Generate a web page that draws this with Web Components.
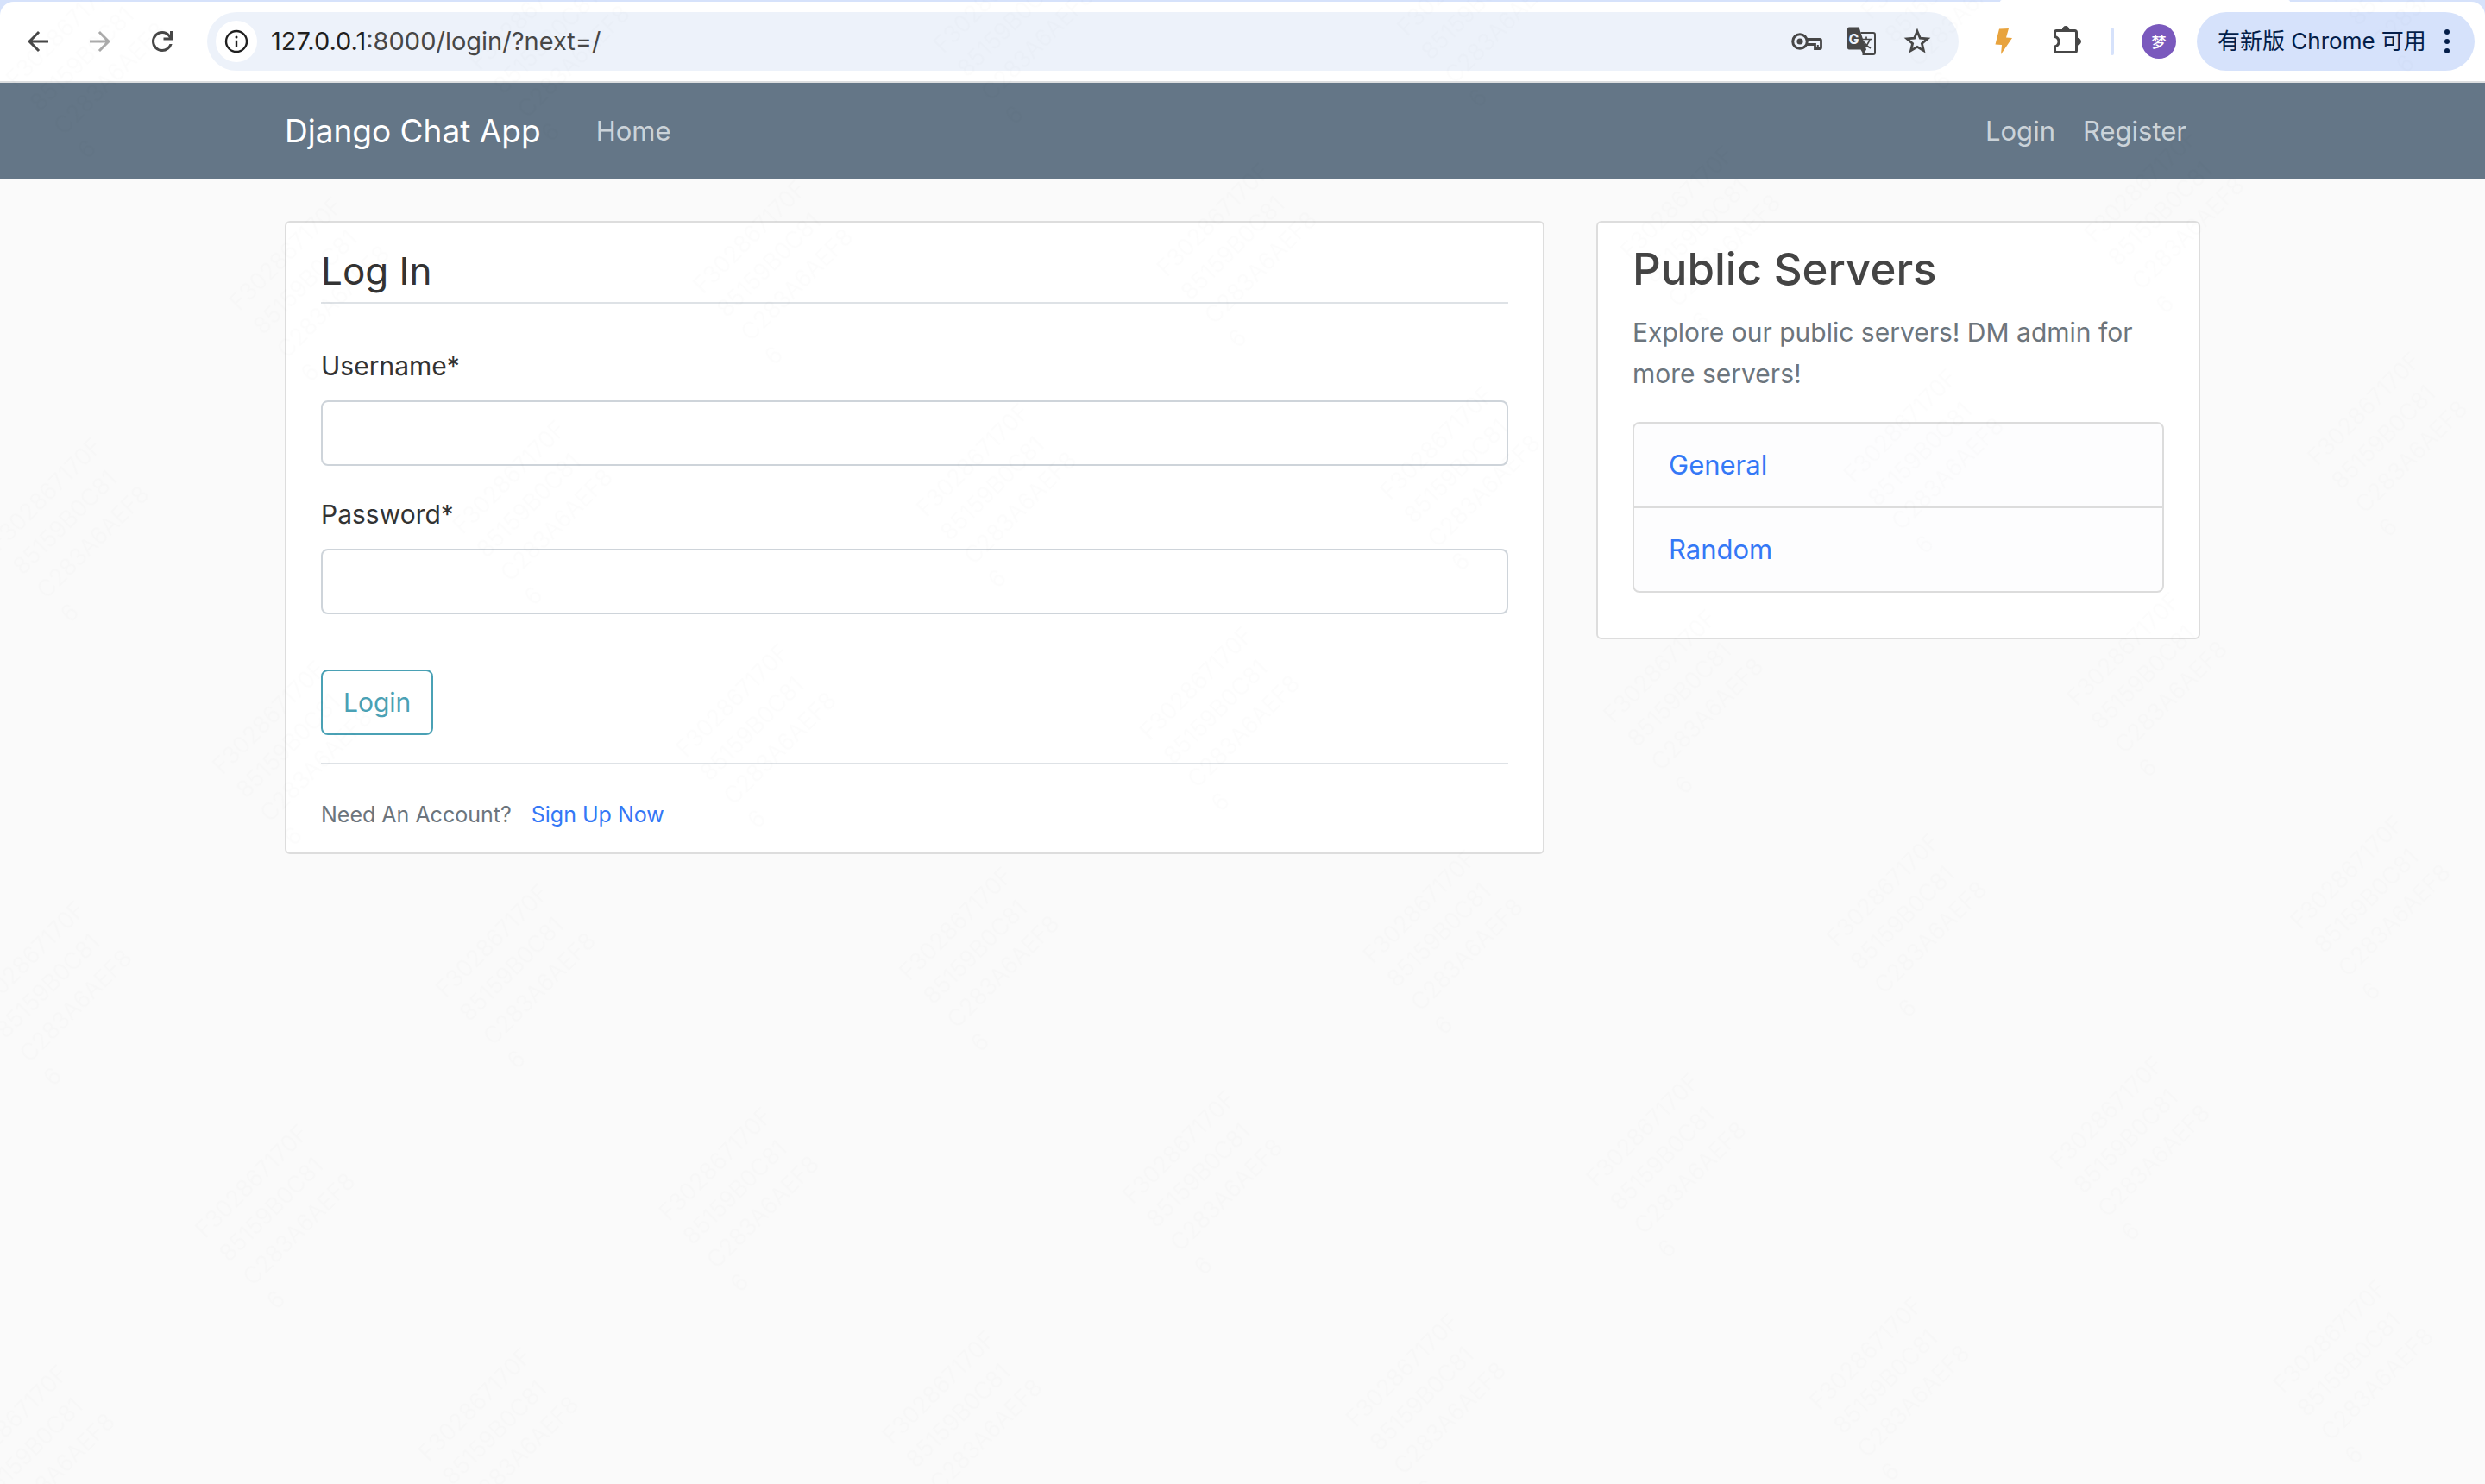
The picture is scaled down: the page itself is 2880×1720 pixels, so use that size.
<!DOCTYPE html>
<html lang="en">
<head>
<meta charset="utf-8">
<title>Django Chat App</title>
<style>
  body {
    margin: 0;
    background: #fafafa;
    color: #333;
    font: 31px/48px Inter, "Noto Sans CJK SC", sans-serif;
  }
</style>
</head>
<body>
<browser-bar></browser-bar>
<site-nav></site-nav>
<page-columns>
  <content-card>
    <login-form></login-form>
  </content-card>
  <content-card slot="side">
    <server-list></server-list>
  </content-card>
</page-columns>
<water-mark></water-mark>

<script>
const define = (name, html) => customElements.define(name, class extends HTMLElement {
  constructor() {
    super();
    this.attachShadow({ mode: 'open' }).innerHTML = html;
  }
});

define('browser-bar', `
<style>
  :host { display: block; background: #d6e2fb; }
  .strip { display: flex; justify-content: flex-end; height: 2px; padding-right: 226px; }
  .tab { width: 336px; background: #fff; border-radius: 2px 2px 0 0; }
  .bar {
    display: flex; align-items: center; height: 92px; padding: 0 12px 0 8px;
    background: #fff; border-bottom: 2px solid #dcdee0; border-radius: 16px 16px 0 0;
  }
  button {
    display: grid; place-items: center; flex: none; box-sizing: border-box;
    width: 72px; height: 68px; padding: 0; border: 0; background: none; color: #474747;
    font: inherit; font-size: 26px;
  }
  button:disabled { color: #ababab; }
  svg { display: block; width: 36px; height: 36px; fill: currentColor; }
  .omnibox {
    display: flex; align-items: center; flex: 1; height: 68px; margin: 0 16px;
    padding: 0 16px 0 10px; border-radius: 34px; background: #edf2fa;
  }
  .omnibox button { width: 64px; }
  .omnibox .info { width: 48px; height: 48px; border-radius: 50%; background: #fff; color: #1f1f1f; }
  .url { flex: 1; margin-left: 16px; font-size: 29px; color: #474747; }
  .url b { font-weight: 400; color: #1f1f1f; }
  .rule { width: 4px; height: 32px; margin: 0 32px 0 16px; border-radius: 2px; background: #d6e2fb; }
  .bar .avatar {
    width: 40px; height: 40px; border-radius: 50%; background: #7a59bd; color: #fff;
    font: 500 17px/24px "Noto Sans CJK SC", sans-serif;
  }
  .bar .update {
    display: flex; align-items: center; justify-content: space-between; width: 322px; margin-left: 24px;
    padding: 0 26px 0 24px; border-radius: 34px; background: #d6e2fb; color: #041e49; white-space: nowrap;
  }
  .update svg { width: 12px; }
  .bar .bolt { color: #e8a33d; }
</style>
<div class="strip"><span class="tab"></span></div>
<div class="bar">
  <button aria-label="Back"><svg viewBox="0 0 24 24"><path d="M7.825 13l5.6 5.6L12 20l-8-8 8-8 1.425 1.4L7.825 11H20v2z"/></svg></button>
  <button aria-label="Forward" disabled><svg viewBox="0 0 24 24"><path d="M16.175 13H4v-2h12.175l-5.6-5.6L12 4l8 8-8 8-1.425-1.4z"/></svg></button>
  <button aria-label="Reload"><svg viewBox="0 0 24 24"><path d="M12 20q-3.35 0-5.675-2.325T4 12t2.325-5.675T12 4q1.725 0 3.3.712T18 6.75V4h2v7h-7V9h4.2q-.8-1.4-2.187-2.2T12 6Q9.5 6 7.75 7.75T6 12t1.75 4.25T12 18q1.925 0 3.475-1.1T17.65 14h2.1q-.7 2.65-2.85 4.325T12 20Z"/></svg></button>
  <div class="omnibox">
    <button class="info" aria-label="Site information"><svg viewBox="0 0 36 36"><circle cx="18" cy="18" r="12" fill="none" stroke="currentColor" stroke-width="2.4"/><circle cx="18" cy="13" r="1.5"/><path d="M16.8 16.8h2.4v7.4h-2.4z"/></svg></button>
    <span class="url"><b>127.0.0.1</b>:8000/login/?next=/</span>
    <button aria-label="Passwords"><svg viewBox="0 0 36 36"><circle cx="10" cy="18" r="8.3" fill="none" stroke="currentColor" stroke-width="3"/><circle cx="10" cy="18" r="3.6"/><path d="M17.5 15.500H33q1.500 0 1.500 1.500V25q0 1.500-1.500 1.500H27.500V21.500H17.500" fill="none" stroke="currentColor" stroke-width="2.800"/><path d="M29.800 22h2v4.500h-2z"/></svg></button>
    <button aria-label="Translate"><svg viewBox="0 0 36 36"><path d="M3 1.500h11.500l8.500 26-3.500 5.500-3-5.500H3q-2 0-2-2v-22q0-2 2-2z"/><path d="M16.500 8H31q2 0 2 2v21q0 2-2 2H18.500" fill="none" stroke="currentColor" stroke-width="2"/><text x="2.500" y="21" font-size="16" font-weight="700" fill="#edf2fa">G</text><path d="M17.500 15.500h11.500M23 12.500v3M27 15.500q-2 7-8 11M20 18.500q3 5 8 7.500" fill="none" stroke="currentColor" stroke-width="1.700"/></svg></button>
    <button aria-label="Bookmark"><svg viewBox="0 0 36 36"><path d="M18 6.200l3.300 7.900 8.600.7-6.500 5.600 2 8.300-7.400-4.400-7.400 4.400 2-8.300-6.500-5.600 8.600-.7z" fill="none" stroke="currentColor" stroke-width="2.800"/></svg></button>
  </div>
  <button class="bolt" aria-label="Lightning extension"><svg viewBox="0 0 36 36"><path d="M13 3.500L24 3l-3 10.500 7 .5-13 19 1-11-7.500-.5z"/></svg></button>
  <button aria-label="Extensions"><svg viewBox="0 0 36 36"><path d="M7.500 5.500h21q2 0 2 2v21q0 2-2 2h-21q-2 0-2-2V24q4.500-1.200 4.500-5.800T5.500 12.500V7.500q0-2 2-2z" fill="none" stroke="currentColor" stroke-width="3"/><path d="M13.800 5a4.300 5 0 0 1 8.600 0zM31 13.800a5 4.300 0 0 1 0 8.600z"/></svg></button>
  <span class="rule"></span>
  <button class="avatar" aria-label="Profile">梦</button>
  <button class="update"><span>有新版 Chrome 可用</span><svg viewBox="0 0 12 36"><circle cx="6" cy="7" r="3"/><circle cx="6" cy="18" r="3"/><circle cx="6" cy="29" r="3"/></svg></button>
</div>`);

define('site-nav', `
<style>
  :host { display: block; background: #647687; }
  nav {
    display: flex; align-items: center; box-sizing: border-box; max-width: 2220px; height: 112px;
    margin: 0 auto; color: #cbd3d9;
  }
  a { color: inherit; text-decoration: none; padding: 0 16px; }
  .brand { margin-right: 48px; padding: 0; color: #fff; font-size: 37px; }
  .end { display: flex; margin-left: auto; }
</style>
<nav>
  <a class="brand" href="#">Django Chat App</a>
  <a href="#">Home</a>
  <div class="end"><a href="#">Login</a><a href="#">Register</a></div>
</nav>`);

define('page-columns', `
<style>
  :host {
    display: grid; grid-template-columns: 1460fr 700fr; gap: 60px; align-items: start;
    max-width: 2220px; margin: 48px auto 0;
  }
</style>
<slot></slot><slot name="side"></slot>`);

define('content-card', `
<style>
  :host { display: block; padding: 20px 40px; border: 2px solid #ddd; border-radius: 6px; background: #fff; }
</style>
<slot></slot>`);

define('login-form', `
<style>
  :host { display: block; font-size: 30px; }
  fieldset { margin: 0 0 64px; padding: 0; border: 0; }
  legend {
    box-sizing: border-box; width: 100%; margin-bottom: 48px; padding: 0;
    border-bottom: 2px solid #dee2e6; font-size: 44px; line-height: 72px;
  }
  label { display: block; margin-bottom: 16px; }
  input {
    display: block; box-sizing: border-box; width: 100%; height: 76px; padding: 12px 24px;
    border: 2px solid #ced4da; border-radius: 8px; background: #fff; font: inherit; color: #495057;
  }
  input + label { margin-top: 32px; }
  button {
    display: block; height: 76px; padding: 0 24px; border: 2px solid #4aa1b5; border-radius: 8px;
    background: none; color: #4aa1b5; font: inherit;
  }
  footer { margin-top: 32px; padding-top: 32px; border-top: 2px solid #dee2e6; color: #6c757d; }
  small { display: inline; font-size: 25px; }
  a { margin-left: 16px; color: #3478f6; text-decoration: none; }
</style>
<form onsubmit="return false">
  <fieldset>
    <legend>Log In</legend>
    <label for="username">Username*</label>
    <input id="username" type="text" autocomplete="username">
    <label for="password">Password*</label>
    <input id="password" type="password" autocomplete="current-password">
  </fieldset>
  <button>Login</button>
</form>
<footer><small>Need An Account? <a href="#">Sign Up Now</a></small></footer>`);

define('server-list', `
<style>
  :host { display: block; }
  h3 { margin: 0 0 16px; font-size: 51px; font-weight: 500; line-height: 67px; color: #444; }
  p { margin: 0 0 32px; font-size: 30px; color: #6c757d; }
  ul { margin: 0 0 32px; padding: 0; list-style: none; border: 2px solid #dcdcdc; border-radius: 8px; background: #fdfdfe; }
  li { padding: 24px 40px; }
  li + li { border-top: 2px solid #dcdcdc; }
  a { color: #3478f6; text-decoration: none; }
</style>
<h3>Public Servers</h3>
<p>Explore our public servers! DM admin for more servers!</p>
<ul>
  <li><a href="#">General</a></li>
  <li><a href="#">Random</a></li>
</ul>`);

define('water-mark', `
<style>
  :host { position: fixed; inset: 0; pointer-events: none; }
  svg { display: block; width: 100%; height: 100%; }
  text { font-size: 27px; font-weight: 300; fill: #000; fill-opacity: .012; }
</style>
<svg aria-hidden="true">
  <defs>
    <pattern id="mark" width="394" height="366" patternUnits="userSpaceOnUse" patternTransform="translate(501 599) rotate(-45)">
      <text x="10" y="40">F302867170F</text>
      <text x="10" y="79">85159B0C81</text>
      <text x="10" y="118">C283A6AEF8</text>
      <text x="10" y="157">6</text>
    </pattern>
  </defs>
  <rect width="100%" height="100%" fill="url(#mark)"/>
</svg>`);
</script>
</body>
</html>
